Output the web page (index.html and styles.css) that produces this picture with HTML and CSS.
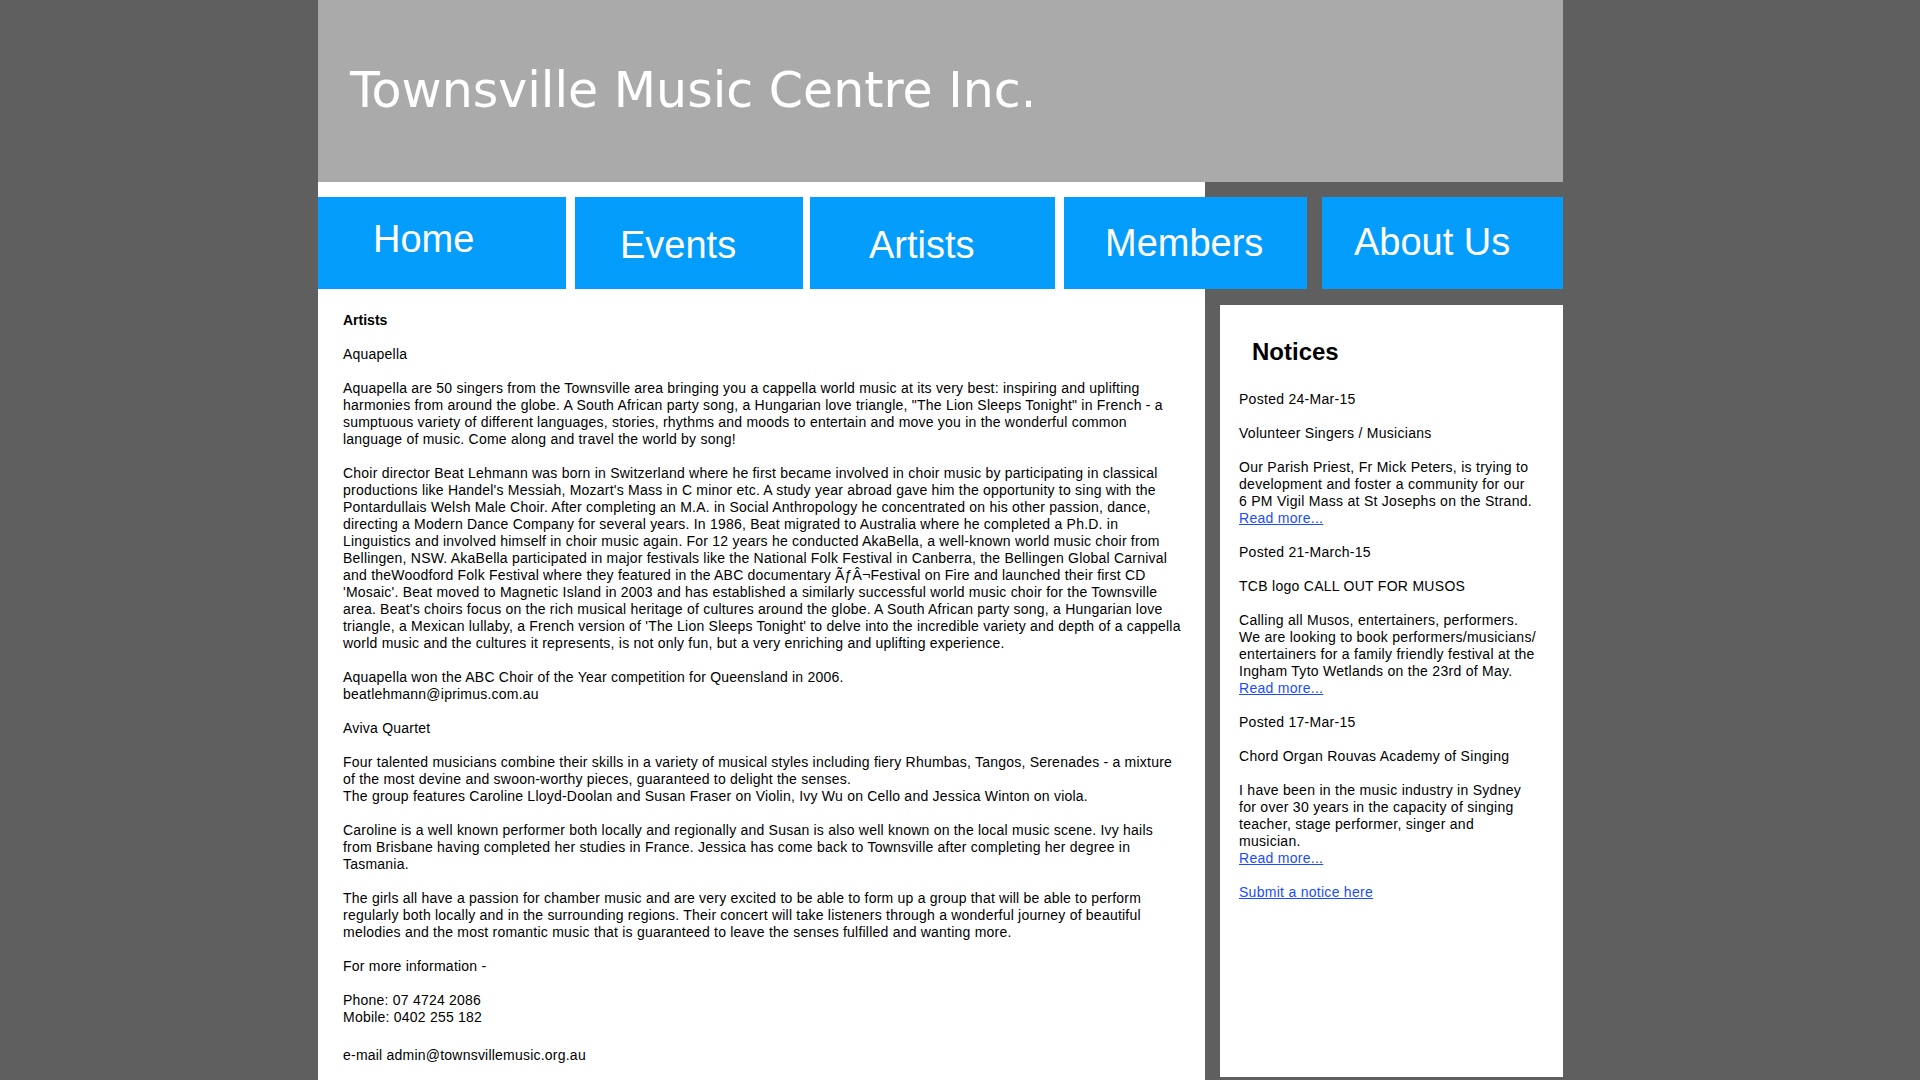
FILE: index.html
```html
<!DOCTYPE html>
<html lang="en">
<head>
<meta charset="utf-8">
<title>Townsville Music Centre Inc. - Artists</title>
<link rel="stylesheet" href="styles.css">
</head>
<body>
<div class="page">
  <header class="masthead">
    <h1 class="site-title">Townsville Music Centre Inc.</h1>
  </header>
  <div class="main">
    <nav class="nav">
      <a class="nav-btn nav-home" href="#">Home</a>
      <a class="nav-btn nav-events" href="#">Events</a>
      <a class="nav-btn nav-artists" href="#">Artists</a>
      <a class="nav-btn nav-members" href="#">Members</a>
      <a class="nav-btn nav-about" href="#">About Us</a>
    </nav>
    <div class="columns">
      <div class="content">
        <p class="title"><strong>Artists</strong></p>
        <p>Aquapella</p>
        <p>Aquapella are 50 singers from the Townsville area bringing you a cappella world music at its very best: inspiring and uplifting<br>harmonies from around the globe. A South African party song, a Hungarian love triangle, "The Lion Sleeps Tonight" in French - a<br>sumptuous variety of different languages, stories, rhythms and moods to entertain and move you in the wonderful common<br>language of music. Come along and travel the world by song!</p>
        <p>Choir director Beat Lehmann was born in Switzerland where he first became involved in choir music by participating in classical<br>productions like Handel's Messiah, Mozart's Mass in C minor etc. A study year abroad gave him the opportunity to sing with the<br>Pontardullais Welsh Male Choir. After completing an M.A. in Social Anthropology he concentrated on his other passion, dance,<br>directing a Modern Dance Company for several years. In 1986, Beat migrated to Australia where he completed a Ph.D. in<br>Linguistics and involved himself in choir music again. For 12 years he conducted AkaBella, a well-known world music choir from<br>Bellingen, NSW. AkaBella participated in major festivals like the National Folk Festival in Canberra, the Bellingen Global Carnival<br>and theWoodford Folk Festival where they featured in the ABC documentary ÃƒÂ¬Festival on Fire and launched their first CD<br>'Mosaic'. Beat moved to Magnetic Island in 2003 and has established a similarly successful world music choir for the Townsville<br>area. Beat's choirs focus on the rich musical heritage of cultures around the globe. A South African party song, a Hungarian love<br>triangle, a Mexican lullaby, a French version of 'The Lion Sleeps Tonight' to delve into the incredible variety and depth of a cappella<br>world music and the cultures it represents, is not only fun, but a very enriching and uplifting experience.</p>
        <p>Aquapella won the ABC Choir of the Year competition for Queensland in 2006.<br>beatlehmann@iprimus.com.au</p>
        <p>Aviva Quartet</p>
        <p>Four talented musicians combine their skills in a variety of musical styles including fiery Rhumbas, Tangos, Serenades - a mixture<br>of the most devine and swoon-worthy pieces, guaranteed to delight the senses.<br>The group features Caroline Lloyd-Doolan and Susan Fraser on Violin, Ivy Wu on Cello and Jessica Winton on viola.</p>
        <p>Caroline is a well known performer both locally and regionally and Susan is also well known on the local music scene. Ivy hails<br>from Brisbane having completed her studies in France. Jessica has come back to Townsville after completing her degree in<br>Tasmania.</p>
        <p>The girls all have a passion for chamber music and are very excited to be able to form up a group that will be able to perform<br>regularly both locally and in the surrounding regions. Their concert will take listeners through a wonderful journey of beautiful<br>melodies and the most romantic music that is guaranteed to leave the senses fulfilled and wanting more.</p>
        <p>For more information -</p>
        <p>Phone: 07 4724 2086<br>Mobile: 0402 255 182</p>
        <p class="email">e-mail admin@townsvillemusic.org.au</p>
      </div>
      <aside class="sidebar">
        <div class="notices">
          <h2 class="notices-title">Notices</h2>
          <p>Posted 24-Mar-15</p>
          <p>Volunteer Singers / Musicians</p>
          <p>Our Parish Priest, Fr Mick Peters, is trying to<br>development and foster a community for our<br>6 PM Vigil Mass at St Josephs on the Strand.<br><a href="#">Read more...</a></p>
          <p>Posted 21-March-15</p>
          <p>TCB logo CALL OUT FOR MUSOS</p>
          <p>Calling all Musos, entertainers, performers.<br>We are looking to book performers/musicians/<br>entertainers for a family friendly festival at the<br>Ingham Tyto Wetlands on the 23rd of May.<br><a href="#">Read more...</a></p>
          <p>Posted 17-Mar-15</p>
          <p>Chord Organ Rouvas Academy of Singing</p>
          <p>I have been in the music industry in Sydney<br>for over 30 years in the capacity of singing<br>teacher, stage performer, singer and<br>musician.<br><a href="#">Read more...</a></p>
          <p><a href="#">Submit a notice here</a></p>
        </div>
      </aside>
    </div>
  </div>
</div>
</body>
</html>
```
FILE: styles.css
```css
html, body {
  margin: 0;
  padding: 0;
}

body {
  background: #5f5f5f;
  font-family: "Liberation Sans", Arial, sans-serif;
  color: #000;
}

.page {
  width: 1245px;
  margin: 0 0 0 318px;
}

/* ---------- Masthead ---------- */
.masthead {
  height: 182px;
  background: #aaaaaa;
  box-sizing: border-box;
  padding: 66px 0 0 32px;
}

.site-title {
  margin: 0;
  font-family: "DejaVu Sans", Verdana, sans-serif;
  font-weight: normal;
  font-size: 49px;
  line-height: 49px;
  color: #ffffff;
  white-space: nowrap;
}

/* ---------- Main area ---------- */
.main {
  background: linear-gradient(to right, #ffffff 0, #ffffff 887px, #5f5f5f 887px, #5f5f5f 100%);
}

.nav {
  display: flex;
  padding-top: 15px;
  height: 107px;
  box-sizing: border-box;
}

.nav-btn {
  display: block;
  height: 92px;
  box-sizing: border-box;
  background: #059dfb;
  color: #ffffff;
  text-decoration: none;
  font-family: "Liberation Sans", Arial, sans-serif;
  font-size: 38px;
  line-height: 38px;
  white-space: nowrap;
}

.nav-home    { width: 248px; margin-right: 9px;  padding: 23px 0 0 55px; }
.nav-events  { width: 228px; margin-right: 7px;  padding: 29px 0 0 45px; }
.nav-artists { width: 245px; margin-right: 9px;  padding: 29px 0 0 59px; }
.nav-members { width: 243px; margin-right: 15px; padding: 27px 0 0 41px; }
.nav-about   { width: 241px; padding: 26px 0 0 32px; }

.columns {
  display: grid;
  grid-template-columns: 887px 358px;
}

/* ---------- Content ---------- */
.content {
  background: #ffffff;
  padding: 23px 4px 20px 25px;
  font-size: 14px;
  line-height: 17px;
  letter-spacing: 0.22px;
}

.content p {
  margin: 0 0 17px;
}

.content .title {
  letter-spacing: 0;
}

.content .email {
  margin-top: 21px;
}

/* ---------- Sidebar ---------- */
.sidebar {
  background: #5f5f5f;
  padding: 16px 0 0 15px;
}

.notices {
  background: #ffffff;
  height: 772px;
  box-sizing: border-box;
  padding: 33px 6px 0 19px;
  font-size: 14px;
  line-height: 17px;
  letter-spacing: 0.28px;
}

.notices-title {
  margin: 0 0 25px 13px;
  font-size: 24px;
  line-height: 28px;
  font-weight: bold;
  letter-spacing: 0;
}

.notices p {
  margin: 0 0 17px;
}

.notices a {
  color: #1a4cff;
  text-decoration: underline;
}
```
